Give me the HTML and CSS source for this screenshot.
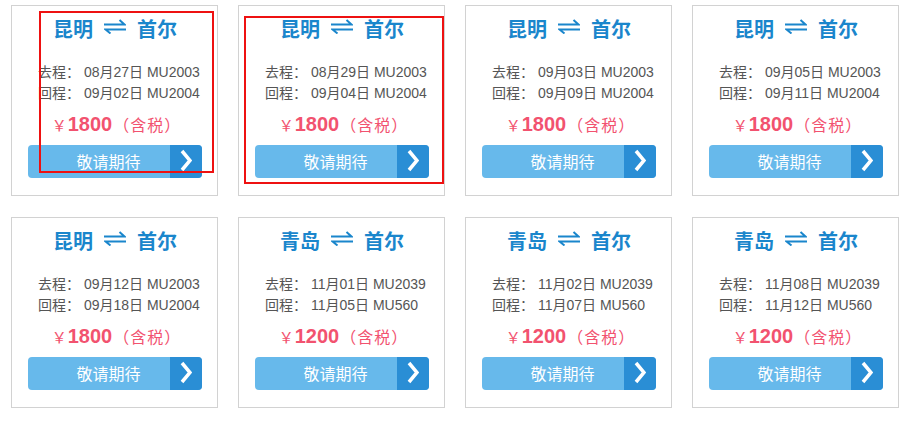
FILE: index.html
```html
<!DOCTYPE html>
<html lang="zh-CN">
<head>
<meta charset="utf-8">
<title>航线</title>
<link rel="stylesheet" href="styles.css">
</head>
<body>
<div class="page">
  <div class="grid">
    <div class="card">
      <div class="title"><span>昆明</span><svg class="swap" viewBox="0 0 22 15"><path d="M0 5.5H20.5L15.5 1M22 10.5H1.5L6.5 14.5"/></svg><span>首尔</span></div>
      <div class="info"><div>去程： 08月27日 MU2003</div><div>回程： 09月02日 MU2004</div></div>
      <div class="price"><span class="yen">￥</span><b>1800</b><span class="tax">（含税）</span></div>
      <div class="btn"><span class="btn-text">敬请期待</span><span class="btn-go"><svg viewBox="0 0 12 23"><path d="M2 2L10 11.5L2 21"/></svg></span></div>
    </div>
    <div class="card">
      <div class="title"><span>昆明</span><svg class="swap" viewBox="0 0 22 15"><path d="M0 5.5H20.5L15.5 1M22 10.5H1.5L6.5 14.5"/></svg><span>首尔</span></div>
      <div class="info"><div>去程： 08月29日 MU2003</div><div>回程： 09月04日 MU2004</div></div>
      <div class="price"><span class="yen">￥</span><b>1800</b><span class="tax">（含税）</span></div>
      <div class="btn"><span class="btn-text">敬请期待</span><span class="btn-go"><svg viewBox="0 0 12 23"><path d="M2 2L10 11.5L2 21"/></svg></span></div>
    </div>
    <div class="card">
      <div class="title"><span>昆明</span><svg class="swap" viewBox="0 0 22 15"><path d="M0 5.5H20.5L15.5 1M22 10.5H1.5L6.5 14.5"/></svg><span>首尔</span></div>
      <div class="info"><div>去程： 09月03日 MU2003</div><div>回程： 09月09日 MU2004</div></div>
      <div class="price"><span class="yen">￥</span><b>1800</b><span class="tax">（含税）</span></div>
      <div class="btn"><span class="btn-text">敬请期待</span><span class="btn-go"><svg viewBox="0 0 12 23"><path d="M2 2L10 11.5L2 21"/></svg></span></div>
    </div>
    <div class="card">
      <div class="title"><span>昆明</span><svg class="swap" viewBox="0 0 22 15"><path d="M0 5.5H20.5L15.5 1M22 10.5H1.5L6.5 14.5"/></svg><span>首尔</span></div>
      <div class="info"><div>去程： 09月05日 MU2003</div><div>回程： 09月11日 MU2004</div></div>
      <div class="price"><span class="yen">￥</span><b>1800</b><span class="tax">（含税）</span></div>
      <div class="btn"><span class="btn-text">敬请期待</span><span class="btn-go"><svg viewBox="0 0 12 23"><path d="M2 2L10 11.5L2 21"/></svg></span></div>
    </div>
    <div class="card">
      <div class="title"><span>昆明</span><svg class="swap" viewBox="0 0 22 15"><path d="M0 5.5H20.5L15.5 1M22 10.5H1.5L6.5 14.5"/></svg><span>首尔</span></div>
      <div class="info"><div>去程： 09月12日 MU2003</div><div>回程： 09月18日 MU2004</div></div>
      <div class="price"><span class="yen">￥</span><b>1800</b><span class="tax">（含税）</span></div>
      <div class="btn"><span class="btn-text">敬请期待</span><span class="btn-go"><svg viewBox="0 0 12 23"><path d="M2 2L10 11.5L2 21"/></svg></span></div>
    </div>
    <div class="card">
      <div class="title"><span>青岛</span><svg class="swap" viewBox="0 0 22 15"><path d="M0 5.5H20.5L15.5 1M22 10.5H1.5L6.5 14.5"/></svg><span>首尔</span></div>
      <div class="info"><div>去程： 11月01日 MU2039</div><div>回程： 11月05日 MU560</div></div>
      <div class="price"><span class="yen">￥</span><b>1200</b><span class="tax">（含税）</span></div>
      <div class="btn"><span class="btn-text">敬请期待</span><span class="btn-go"><svg viewBox="0 0 12 23"><path d="M2 2L10 11.5L2 21"/></svg></span></div>
    </div>
    <div class="card">
      <div class="title"><span>青岛</span><svg class="swap" viewBox="0 0 22 15"><path d="M0 5.5H20.5L15.5 1M22 10.5H1.5L6.5 14.5"/></svg><span>首尔</span></div>
      <div class="info"><div>去程： 11月02日 MU2039</div><div>回程： 11月07日 MU560</div></div>
      <div class="price"><span class="yen">￥</span><b>1200</b><span class="tax">（含税）</span></div>
      <div class="btn"><span class="btn-text">敬请期待</span><span class="btn-go"><svg viewBox="0 0 12 23"><path d="M2 2L10 11.5L2 21"/></svg></span></div>
    </div>
    <div class="card">
      <div class="title"><span>青岛</span><svg class="swap" viewBox="0 0 22 15"><path d="M0 5.5H20.5L15.5 1M22 10.5H1.5L6.5 14.5"/></svg><span>首尔</span></div>
      <div class="info"><div>去程： 11月08日 MU2039</div><div>回程： 11月12日 MU560</div></div>
      <div class="price"><span class="yen">￥</span><b>1200</b><span class="tax">（含税）</span></div>
      <div class="btn"><span class="btn-text">敬请期待</span><span class="btn-go"><svg viewBox="0 0 12 23"><path d="M2 2L10 11.5L2 21"/></svg></span></div>
    </div>
  </div>
  <div class="mark mark-1"></div>
  <div class="mark mark-2"></div>
</div>
</body>
</html>
```
FILE: styles.css
```css
html, body {
  margin: 0;
  padding: 0;
  background: #fff;
}
body {
  font-family: "Liberation Sans", Arial, "Noto Sans CJK SC", sans-serif;
}
.page {
  position: relative;
  width: 904px;
  height: 425px;
}
.grid {
  display: grid;
  grid-template-columns: repeat(4, 207px);
  grid-auto-rows: 191px;
  column-gap: 20px;
  row-gap: 21px;
  padding: 5px 0 0 11px;
}
.card {
  box-sizing: border-box;
  border: 1px solid #d2d2d2;
  display: flex;
  flex-direction: column;
  padding: 7px 15px 0 16px;
}
.title {
  display: flex;
  justify-content: center;
  align-items: center;
  gap: 11px;
  height: 30px;
  font-family: "Noto Sans CJK SC", sans-serif;
  font-weight: bold;
  font-size: 20px;
  color: #1a86cc;
}
.swap {
  width: 22px;
  height: 15px;
  margin-top: -3px;
}
.swap path {
  fill: none;
  stroke: #1a86cc;
  stroke-width: 2;
}
.info {
  margin-top: 19px;
  padding-left: 10px;
  font-size: 14px;
  line-height: 21px;
  color: #555;
  font-family: "Liberation Sans", "Noto Sans CJK SC", sans-serif;
}
.price {
  margin-top: 8px;
  height: 24px;
  line-height: 24px;
  text-align: center;
  color: #f2526f;
  font-family: "Liberation Sans", "Noto Sans CJK SC", sans-serif;
  padding-left: 3px;
}
.yen {
  font-family: "Noto Sans CJK SC", sans-serif;
  font-size: 15px;
  margin-right: 1px;
}
.price b {
  font-size: 20px;
}
.tax {
  font-family: "Noto Sans CJK SC", sans-serif;
  font-size: 16px;
  letter-spacing: 1px;
  margin-left: 1px;
}
.btn {
  margin-top: 9px;
  height: 33px;
  display: flex;
  border-radius: 4px;
  overflow: hidden;
  background: #67b9eb;
}
.btn-text {
  flex: 1;
  padding-left: 19px;
  text-align: center;
  color: #fff;
  font-family: "Noto Sans CJK SC", sans-serif;
  font-size: 16px;
  line-height: 33px;
}
.btn-go {
  width: 32px;
  background: #2a8ed5;
  display: flex;
  align-items: center;
  justify-content: center;
}
.btn-go svg {
  width: 12px;
  height: 23px;
  margin-top: -2px;
}
.btn-go path {
  fill: none;
  stroke: #fff;
  stroke-width: 3.5;
}
.mark {
  position: absolute;
  border: 2px solid #ee1111;
  box-sizing: border-box;
}
.mark-1 {
  left: 39px;
  top: 11px;
  width: 175px;
  height: 162px;
}
.mark-2 {
  left: 244px;
  top: 16px;
  width: 200px;
  height: 168px;
}
```
